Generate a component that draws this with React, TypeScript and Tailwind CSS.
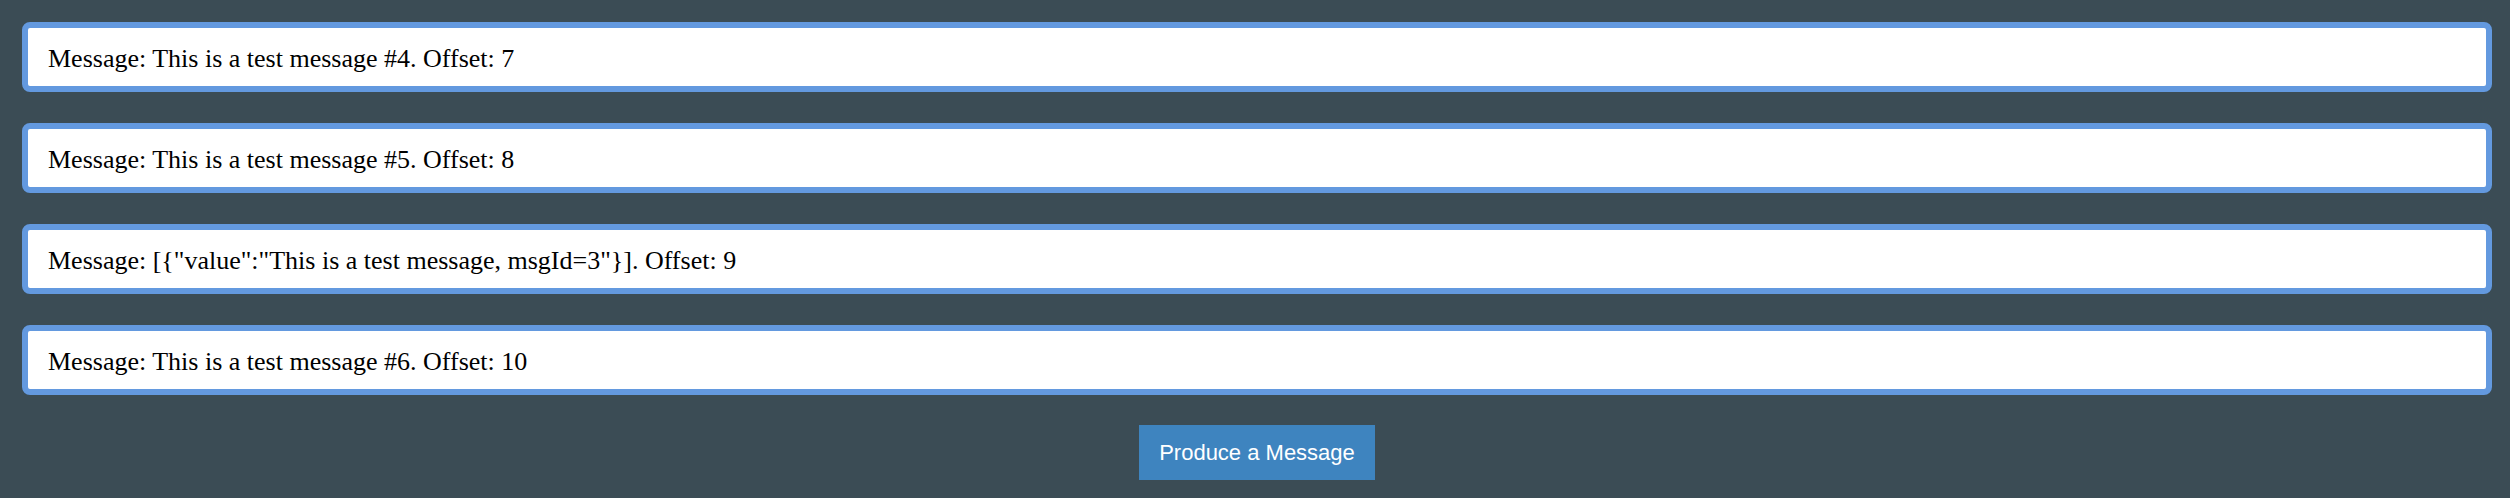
import React from 'react';

const messages: string[] = [
  'Message: This is a test message #4. Offset: 7',
  'Message: This is a test message #5. Offset: 8',
  'Message: [{"value":"This is a test message, msgId=3"}]. Offset: 9',
  'Message: This is a test message #6. Offset: 10',
];

const MessageRow: React.FC<{ text: string }> = ({ text }) => (
  <div className="bg-white border-[6px] border-[#6399df] rounded-[8px] pl-[20px] pr-4 pt-[17px] pb-[13px]">
    <p className="text-[26px] leading-[28px] text-black font-['Liberation_Serif','Times_New_Roman',serif] whitespace-pre">
      {text}
    </p>
  </div>
);

const App: React.FC = () => {
  return (
    <div className="w-full min-h-[498px] bg-[#3b4c55] pt-[22px] pl-[22px] pr-[18px]">
      <div className="flex flex-col gap-[31px]">
        {messages.map((m, i) => (
          <MessageRow key={i} text={m} />
        ))}
      </div>

      <div className="flex justify-center mt-[30px]">
        <button className="w-[236px] h-[55px] bg-[#3e84bf] text-white text-[22px] font-['Liberation_Sans',Arial,sans-serif] flex items-center justify-center">
          Produce a Message
        </button>
      </div>
    </div>
  );
};

export default App;
